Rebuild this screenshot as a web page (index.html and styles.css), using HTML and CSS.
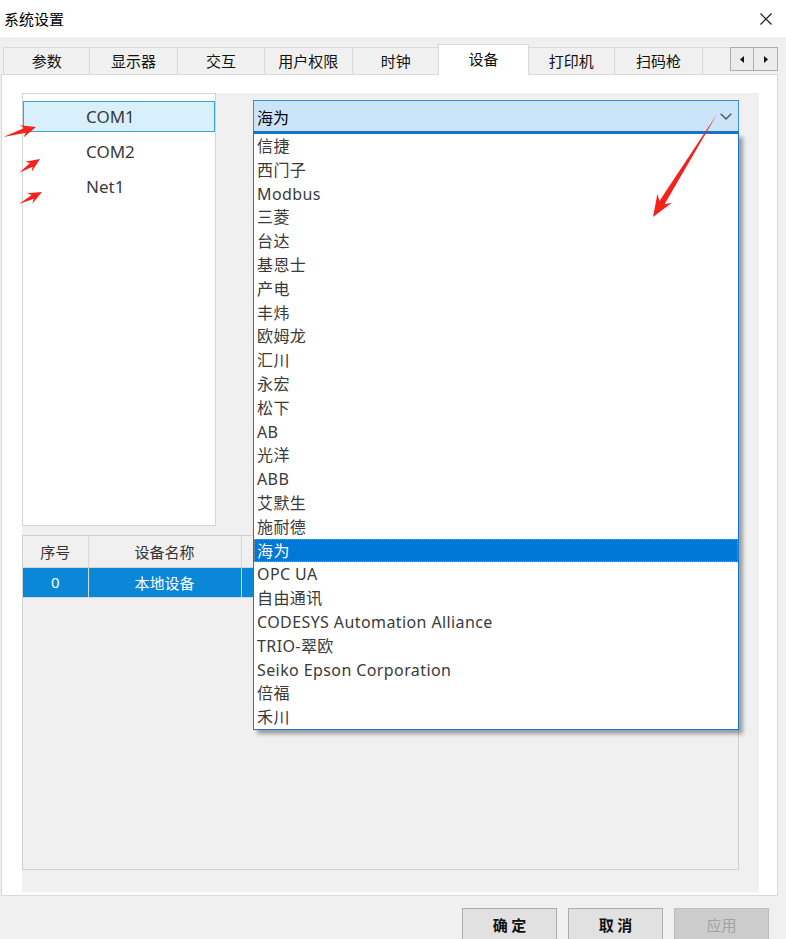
FILE: index.html
```html
<!DOCTYPE html>
<html lang="zh-CN">
<head>
    <meta charset="UTF-8">
    <title>系统设置</title>
    <link rel="stylesheet" href="styles.css">
</head>
<body>
    <div class="titlebar">
        <span class="title">系统设置</span>
        <svg class="close" viewBox="0 0 12 12"><path d="M0.5 0.5L11.5 11.5M11.5 0.5L0.5 11.5" stroke="#111" stroke-width="1.1" fill="none"/></svg>
    </div>

    <!-- Reiter -->
    <div class="tabs">
        <div class="tab-list">
            <div class="tab first">参数</div>
            <div class="tab">显示器</div>
            <div class="tab">交互</div>
            <div class="tab">用户权限</div>
            <div class="tab">时钟</div>
            <div class="tab active">设备</div>
            <div class="tab">打印机</div>
            <div class="tab">扫码枪</div>
            <div class="tab"></div>
        </div>
        <div class="tab-scroll">
            <span class="scroll-btn"><svg viewBox="0 0 4 7"><path d="M4 0L0 3.5L4 7Z" fill="#111"/></svg></span>
            <span class="scroll-btn"><svg viewBox="0 0 4 7"><path d="M0 0L4 3.5L0 7Z" fill="#111"/></svg></span>
        </div>
    </div>

    <div class="panel">
        <div class="page">
            <div class="top-row">
                <ul class="ports">
                    <li class="selected">COM1</li>
                    <li>COM2</li>
                    <li>Net1</li>
                </ul>

                <div class="combo-wrap">
                    <div class="combo">
                        <span>海为</span>
                        <svg class="chevron" viewBox="0 0 12 7"><path d="M0.7 0.7L6 6L11.3 0.7" stroke="#555" stroke-width="1.4" fill="none"/></svg>
                    </div>
                    <!-- Aufgeklappte Liste -->
                    <ul class="combo-popup">
                        <li>信捷</li>
                        <li>西门子</li>
                        <li>Modbus</li>
                        <li>三菱</li>
                        <li>台达</li>
                        <li>基恩士</li>
                        <li>产电</li>
                        <li>丰炜</li>
                        <li>欧姆龙</li>
                        <li>汇川</li>
                        <li>永宏</li>
                        <li>松下</li>
                        <li>AB</li>
                        <li>光洋</li>
                        <li>ABB</li>
                        <li>艾默生</li>
                        <li>施耐德</li>
                        <li class="current">海为</li>
                        <li>OPC UA</li>
                        <li>自由通讯</li>
                        <li>CODESYS Automation Alliance</li>
                        <li>TRIO-翠欧</li>
                        <li>Seiko Epson Corporation</li>
                        <li>倍福</li>
                        <li>禾川</li>
                    </ul>
                </div>
            </div>

            <div class="device-table">
                <table>
                    <thead>
                        <tr>
                            <th class="col-no">序号</th>
                            <th class="col-name">设备名称</th>
                            <th></th>
                        </tr>
                    </thead>
                    <tbody>
                        <tr class="row-selected">
                            <td>0</td>
                            <td>本地设备</td>
                            <td></td>
                        </tr>
                    </tbody>
                </table>
            </div>
        </div>
    </div>

    <div class="footer">
        <button class="btn strong">确 定</button>
        <button class="btn strong">取 消</button>
        <button class="btn" disabled>应用</button>
    </div>

    <!-- Markierungen -->
    <svg class="marks" viewBox="0 0 786 939">
        <g fill="#f5221c">
            <polygon transform="translate(36,127) rotate(-16.9)" points="0,0 -15,-6.5 -11.5,-2.5 -34,0 -11.5,2.5 -15,6.5"/>
            <polygon transform="translate(40,159) rotate(-33.7)" points="0,0 -14,-6 -10.5,-2.2 -25,0 -10.5,2.2 -14,6"/>
            <polygon transform="translate(42,192) rotate(-27.6)" points="0,0 -14,-6 -10.5,-2.2 -26,0 -10.5,2.2 -14,6"/>
            <polygon transform="translate(653,217) rotate(121.9)" points="0,0 -22,-8.5 -17,-3 -121,0 -17,3 -22,8.5"/>
        </g>
    </svg>
</body>
</html>
```

FILE: styles.css
```css
* {
    box-sizing: border-box;
}
body {
    margin: 0;
    width: 786px;
    height: 939px;
    overflow: hidden;
    position: relative;
    background-color: #f0f0f0;
    font-family: "Noto Sans", "Noto Sans CJK SC", sans-serif;
    color: #000;
}
.titlebar {
    height: 37px;
    background-color: #fff;
    display: flex;
    align-items: center;
    justify-content: space-between;
    padding: 0 14px 0 4px;
    font-size: 15px;
}
.close {
    width: 12px;
    height: 12px;
}
/* Reiter */
.tabs {
    display: flex;
    height: 38px;
    margin-bottom: -1px;
    position: relative;
    z-index: 2;
}
.tab-list {
    display: flex;
    align-items: flex-start;
    width: 730px;
    padding: 7px 0 0 3px;
    overflow: hidden;
}
.tab {
    flex: 0 0 87.4px;
    height: 27px;
    margin-top: 3px;
    border-top: 1px solid #d9d9d9;
    border-right: 1px solid #d9d9d9;
    display: flex;
    align-items: center;
    justify-content: center;
    padding-bottom: 1px;
    font-size: 15px;
    color: #111;
}
.tab.first {
    border-left: 1px solid #d9d9d9;
}
.tab.active {
    flex-basis: 91px;
    margin: 0 -1px 0 -2px;
    height: 31px;
    padding-bottom: 4px;
    background-color: #fff;
    border-left: 1px solid #d9d9d9;
    position: relative;
    z-index: 1;
}
.tab-scroll {
    display: flex;
    margin-top: 10px;
    height: 24px;
}
.scroll-btn {
    width: 24px;
    height: 24px;
    border: 1px solid #adadad;
    background-color: #ececec;
    display: flex;
    align-items: center;
    justify-content: center;
}
.scroll-btn + .scroll-btn {
    border-left: none;
}
.scroll-btn svg {
    width: 4px;
    height: 7px;
}
/* Inhalt */
.panel {
    margin-left: 1px;
    width: 777px;
    height: 822px;
    background-color: #fff;
    border: 1px solid #d9d9d9;
    padding: 18px 18px 3px 20px;
}
.page {
    height: 799px;
    background-color: #f0f0f0;
}
.top-row {
    display: flex;
    align-items: flex-start;
    height: 433px;
}
.ports {
    list-style: none;
    margin: 0;
    padding: 7px 0 0 0;
    width: 194px;
    height: 433px;
    background-color: #fff;
    border: 1px solid #d4d4d4;
}
.ports li {
    height: 31px;
    margin-bottom: 4px;
    border: 1px solid transparent;
    padding-left: 62px;
    font-size: 17px;
    line-height: 29px;
    color: #3a3a3a;
}
.ports li.selected {
    background-color: #d8f0fc;
    border-color: #3ba0dc;
}
.combo-wrap {
    position: relative;
    width: 486px;
    margin: 7px 0 0 37px;
}
.combo {
    height: 33px;
    background-color: #cce4f7;
    border: 1px solid #3d8bd4;
    border-bottom: 2px solid #1a72c4;
    display: flex;
    align-items: center;
    justify-content: space-between;
    padding: 1px 6px 0 3px;
    font-size: 16px;
}
.chevron {
    width: 12px;
    height: 7px;
}
.combo-popup {
    position: absolute;
    top: 33px;
    left: 0;
    width: 486px;
    margin: 0;
    padding: 0;
    list-style: none;
    background-color: #fff;
    border: 1px solid #1479d4;
    box-shadow: 4px 4px 4px rgba(0, 0, 0, 0.35);
    z-index: 5;
}
.combo-popup li {
    height: 23.8px;
    line-height: 21.8px;
    padding: 2px 0 0 3px;
    font-size: 16px;
    letter-spacing: 0.4px;
    color: #3a3a3a;
    white-space: nowrap;
}
.combo-popup li.current {
    background-color: #0078d7;
    color: #fff;
    outline: 1px dotted #c68a52;
    outline-offset: -1px;
}
/* Tabelle */
.device-table {
    margin-top: 9px;
    width: 717px;
    height: 335px;
    border: 1px solid #d0d0d0;
    background-color: #f0f0f0;
}
.device-table table {
    border-collapse: collapse;
    width: 100%;
}
.device-table th, .device-table td {
    font-size: 15px;
    font-weight: normal;
    text-align: center;
    border-right: 1px solid #d6d6d6;
    border-bottom: 1px solid #d6d6d6;
    padding: 0;
}
.device-table th {
    height: 31px;
    color: #333;
}
.device-table td {
    height: 30px;
}
.col-no {
    width: 65px;
}
.col-name {
    width: 153px;
}
.row-selected td {
    background-color: #0a87d6;
    color: #fff;
}
/* Schaltflächen */
.footer {
    display: flex;
    justify-content: flex-end;
    gap: 11px;
    padding: 12px 17px 0 0;
}
.btn {
    width: 95px;
    height: 32px;
    background-color: #e1e1e1;
    border: 1px solid #adadad;
    font-family: "Noto Sans CJK SC", sans-serif;
    font-size: 15px;
    color: #111;
    padding: 0;
}
.btn.strong {
    font-weight: bold;
}
.btn:disabled {
    background-color: #cccccc;
    border-color: #bfbfbf;
    color: #a2a2a2;
}
.marks {
    position: absolute;
    top: 0;
    left: 0;
    width: 786px;
    height: 939px;
    pointer-events: none;
    z-index: 10;
}
```
